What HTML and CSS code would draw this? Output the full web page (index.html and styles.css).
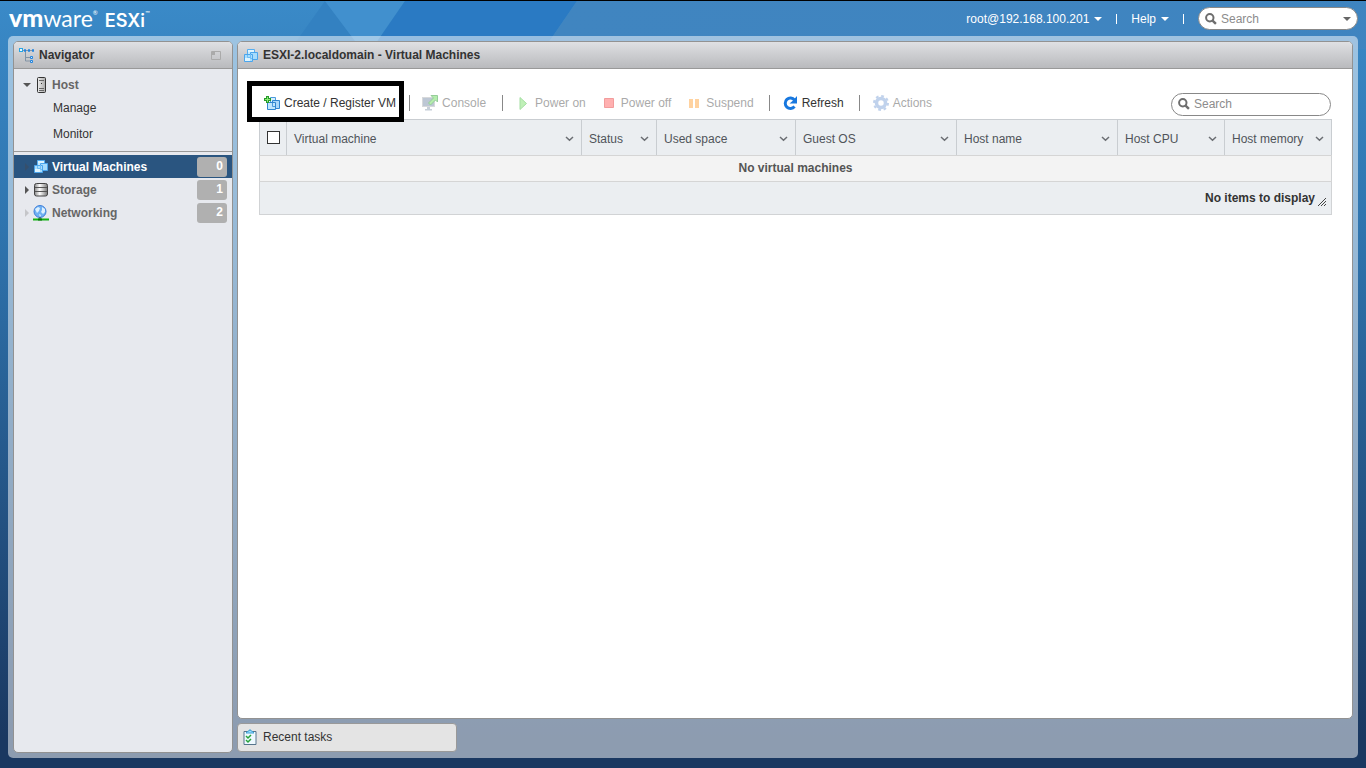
FILE: index.html
```html
<!DOCTYPE html>
<html lang="en">

<head>
  <meta charset="UTF-8">
  <meta name="viewport" content="width=device-width, initial-scale=1.0">
  <title>ESXI-2.localdomain - VMware ESXi</title>
  <link rel="stylesheet" href="styles.css">
</head>

<body>

  <!-- Shared icons -->
  <svg class="sprite" aria-hidden="true">
    <symbol id="icon-vm" viewBox="0 0 14 13">
      <path d="M3.500.5h7v8h-7z" fill="#c4eaff" stroke="#57aef0" />
      <path d="M6.500 3.500h7v7h-7z" fill="#a6dcfc" stroke="#4ba5ec" />
      <path d="M.5 5.500h8v7h-8z" fill="#a9defd" stroke="#4ba5ec" />
      <path d="M6.500 5v4.500H8M3.500 6v2.500H6" fill="none" stroke="#6fbdf5" />
      <path d="M1 9h5v3H1zM4 1h6v2H4z" fill="#dff5ff" />
    </symbol>
    <symbol id="icon-chevron" viewBox="0 0 9 6">
      <path d="M1 1l3.500 3.300L8 1" fill="none" stroke="#6b6e73" stroke-width="1.500" />
    </symbol>
    <symbol id="icon-search" viewBox="0 0 12 12">
      <circle cx="4.800" cy="4.800" r="3.700" fill="none" stroke="#6d6d6d" stroke-width="2" />
      <path d="M7.600 7.600l3.300 3.300" stroke="#6d6d6d" stroke-width="2.400" />
    </symbol>
  </svg>

  <svg class="backdrop" width="100%" height="48" aria-hidden="true">
    <defs><linearGradient id="fade"><stop offset="0" stop-color="#4085c0" /><stop offset="1" stop-color="#3a82c0" /></linearGradient></defs>
    <path d="M325 0L291 48H361z" fill="#3381c1" />
    <path d="M325 0H405L372 48H361z" fill="#4190ce" />
    <path d="M405 0H577L544 48H372z" fill="#2a7ac3" />
    <path d="M577 0H4000V48H544z" fill="url(#fade)" />
  </svg>

  <header class="topbar">
    <div class="logo"><span class="logo-vm">vm</span><span class="logo-ware">ware</span><span class="logo-mark">®</span><span class="logo-esxi">ESXi</span><span class="logo-mark">™</span></div>
    <nav class="user-menu">
      <a href="#">root@192.168.100.201 <i class="caret"></i></a>
      <i class="divider"></i>
      <a href="#">Help <i class="caret"></i></a>
      <i class="divider"></i>
      <label class="search global-search">
        <svg width="12" height="12"><use href="#icon-search" /></svg>
        <input type="text" placeholder="Search" aria-label="Search">
        <i class="caret caret-dark"></i>
      </label>
    </nav>
  </header>

  <div class="frame">
    <aside class="panel navigator">
      <div class="panel-title">
        <svg width="16" height="15" viewBox="0 0 16 15" fill="none">
          <path d="M3 2.500h12M6.500 3v10H11M6.500 9.500H11" stroke="#8394a6" />
          <rect x=".5" y=".5" width="3" height="3" fill="#e8faff" stroke="#29a5e3" />
          <path d="M5.500 1.500h1v2h-1zM9.500 1.500h1v2h-1zM13.500 1.500h1v2h-1zM11.500 8.500h2v2h-2zM11.500 12.500h2v2h-2z" fill="#cfe7fb" stroke="#2585dd" />
        </svg>
        <h2>Navigator</h2>
        <button class="dock" aria-label="Collapse navigator">
          <svg width="10" height="9" viewBox="0 0 10 9"><path d="M.5.5h9v8h-9z" fill="none" stroke="#aaa" /><path d="M1 1h3v3H1z" fill="#aaa" /></svg>
        </button>
      </div>

      <ul class="tree">
        <li><a class="tree-item" href="#">
          <i class="arrow arrow-open"></i>
          <svg class="tree-icon" width="16" height="16" viewBox="0 0 16 16">
            <defs><linearGradient id="tower"><stop offset="0" stop-color="#eee" /><stop offset="1" stop-color="#aaa" /></linearGradient></defs>
            <rect x="4.500" y=".5" width="8" height="15" rx="1" fill="url(#tower)" stroke="#333" />
            <path d="M6 3.500h5M6 11.500h5M6 13.500h5" stroke="#666" />
            <path d="M8 6h1v1H8z" fill="#333" />
          </svg>
          <span>Host</span>
        </a></li>
        <li><a class="tree-child" href="#">Manage</a></li>
        <li><a class="tree-child" href="#">Monitor</a></li>
      </ul>

      <ul class="tree tree-groups">
        <li><a class="tree-item selected" href="#">
          <i class="arrow"></i>
          <svg class="tree-icon" width="16" height="13"><use href="#icon-vm" width="16" height="13" /></svg>
          <span>Virtual Machines</span><b class="badge">0</b>
        </a></li>
        <li><a class="tree-item" href="#">
          <i class="arrow"></i>
          <svg class="tree-icon" width="16" height="14" viewBox="0 0 16 14">
            <defs><linearGradient id="disk"><stop offset="0" stop-color="#888" /><stop offset=".4" stop-color="#fff" /><stop offset="1" stop-color="#777" /></linearGradient></defs>
            <rect x="1.500" y=".5" width="13" height="12.500" rx="2" fill="url(#disk)" stroke="#444" />
            <path d="M2 4.500h12M2 8.500h12" stroke="#555" />
          </svg>
          <span>Storage</span><b class="badge">1</b>
        </a></li>
        <li><a class="tree-item" href="#">
          <i class="arrow arrow-faint"></i>
          <svg class="tree-icon" width="16" height="16" viewBox="0 0 16 16">
            <circle cx="7" cy="6.500" r="6" fill="#6fb0f2" stroke="#3f7fd8" />
            <path d="M2 4l3-2 2 1-1 3-2 2-1-2zM9 2l3 2v3l-2 2-2-2 1-2zM6 9l2 1-1 2z" fill="#dcf0ff" />
            <path d="M7 12v2" stroke="#444" />
            <path d="M0 14.500h16" stroke="#12b212" stroke-width="2" />
            <path d="M5 13.500h4v2H5z" fill="#08720c" />
          </svg>
          <span>Networking</span><b class="badge">2</b>
        </a></li>
      </ul>
    </aside>

    <div class="workspace">
      <main class="panel content">
        <div class="panel-title">
          <svg width="14" height="13"><use href="#icon-vm" /></svg>
          <h1>ESXI-2.localdomain - Virtual Machines</h1>
        </div>

        <div class="content-body">
          <div class="toolbar">
            <button class="tool highlighted">
              <svg width="16" height="15" viewBox="0 0 16 15">
                <path d="M6.500 1.500h5v8h-5z" fill="#d6efff" stroke="#4b9bdd" />
                <path d="M8.500 4.500h7v8h-7z" fill="#a9d8fa" stroke="#2f86d0" />
                <path d="M3.500 6.500h8v7h-8z" fill="#bfe6fd" stroke="#2f86d0" />
                <path d="M8.500 7v3.500h2.500" fill="none" stroke="#4b9bdd" />
                <path d="M3.500 0v7M0 3.500h7" stroke="#279a2b" stroke-width="3" />
                <path d="M3.500 1v5M1 3.500h5" stroke="#8aeb74" />
              </svg>
              Create / Register VM
            </button>
            <i class="separator"></i>
            <button class="tool console" disabled>
              <svg width="16" height="16" viewBox="0 0 16 16">
                <rect x=".5" y="2.500" width="12" height="9" fill="#7d91aa" stroke="#b0b4b8" />
                <path d="M5 12h3v2h2v1.500H3V14h2z" fill="#8fa0b3" />
                <path d="M9 .5h6.500V7l-2-2-5 5-2-2 5-5z" fill="#6bdc5c" stroke="#2f9a38" />
              </svg>
              Console
            </button>
            <i class="separator"></i>
            <button class="tool power-on" disabled>
              <svg width="9" height="13" viewBox="0 0 9 13"><path d="M1 .5l6.500 6L1 12.500z" fill="#82e273" stroke="#4fc14a" /></svg>
              Power on
            </button>
            <button class="tool power-off" disabled>
              <svg width="10" height="10" viewBox="0 0 10 10"><path d="M.5.5h9v9h-9z" fill="#ff6464" stroke="#e63c3c" /></svg>
              Power off
            </button>
            <button class="tool suspend" disabled>
              <svg width="10" height="9" viewBox="0 0 10 9"><path d="M0 0h4v9H0zM6 0h4v9H6z" fill="#ffa742" /></svg>
              Suspend
            </button>
            <i class="separator"></i>
            <button class="tool refresh">
              <svg width="15" height="15" viewBox="0 0 15 15"><path d="M11.500 10.500a5.200 5.200 0 1 1 0-6.500" fill="none" stroke="#1878df" stroke-width="3" /><path d="M14 0v7.500H6.500l3-2.500z" fill="#1878df" /></svg>
              Refresh
            </button>
            <i class="separator"></i>
            <button class="tool actions" disabled>
              <svg width="16" height="16" viewBox="0 0 16 16">
                <circle cx="8" cy="8" r="7" fill="none" stroke="#83a6da" stroke-width="2" stroke-dasharray="2.750 2.750" />
                <circle cx="8" cy="8" r="4.500" fill="none" stroke="#83a6da" stroke-width="3.500" />
              </svg>
              Actions
            </button>
            <label class="search table-search">
              <svg width="12" height="12"><use href="#icon-search" /></svg>
              <input type="text" placeholder="Search" aria-label="Search virtual machines">
            </label>
          </div>

          <table class="vm-table">
            <colgroup>
              <col class="col-check"><col><col class="col-status"><col class="col-space"><col class="col-wide"><col class="col-wide"><col class="col-host"><col class="col-host">
            </colgroup>
            <thead>
              <tr>
                <th class="check-cell"><input type="checkbox" aria-label="Select all"></th>
                <th><div class="column-head">Virtual machine <svg width="9" height="6"><use href="#icon-chevron" /></svg></div></th>
                <th><div class="column-head">Status <svg width="9" height="6"><use href="#icon-chevron" /></svg></div></th>
                <th><div class="column-head">Used space <svg width="9" height="6"><use href="#icon-chevron" /></svg></div></th>
                <th><div class="column-head">Guest OS <svg width="9" height="6"><use href="#icon-chevron" /></svg></div></th>
                <th><div class="column-head">Host name <svg width="9" height="6"><use href="#icon-chevron" /></svg></div></th>
                <th><div class="column-head">Host CPU <svg width="9" height="6"><use href="#icon-chevron" /></svg></div></th>
                <th><div class="column-head">Host memory <svg width="9" height="6"><use href="#icon-chevron" /></svg></div></th>
              </tr>
            </thead>
            <tbody>
              <tr><td colspan="8">No virtual machines</td></tr>
            </tbody>
            <tfoot>
              <tr><td colspan="8"><div class="table-footer">No items to display
                <svg width="8" height="8" viewBox="0 0 8 8"><path d="M0 8l8-8M3 8l5-5M6 8l2-2" stroke="#444" /></svg>
              </div></td></tr>
            </tfoot>
          </table>
        </div>
      </main>

      <button class="recent-tasks">
        <svg width="14" height="16" viewBox="0 0 14 16">
          <path d="M1 2.500h12v13H1z" fill="#eef9ff" stroke="#56758c" />
          <path d="M3 4l2-2h1l1-1.500L8 2h1l2 2z" fill="#9ddcfb" stroke="#3ca0d5" />
          <path d="M3 7l2 2 3-3M3 11l2 2 3-3" fill="none" stroke="#26a33a" stroke-width="1.500" />
        </svg>
        Recent tasks
      </button>
    </div>
  </div>

</body>

</html>
```
FILE: styles.css
```css
* {
  box-sizing: border-box;
}

body {
  font-family: "Liberation Sans", Arial, sans-serif;
  font-size: 12px;
  line-height: 16px;
  color: #333;
  margin: 0;
  min-height: 100vh;
  padding: 0 8px 10px;
  display: flex;
  flex-direction: column;
  border-top: 1px solid #000;
  background: linear-gradient(#3a8ac8, #2f74ae 30%, #1a3861 96%) no-repeat;
}

a {
  color: inherit;
  text-decoration: none;
}

button,
input {
  font: inherit;
  color: inherit;
}

button {
  background: none;
  border: none;
  padding: 0;
  cursor: pointer;
}

h1,
h2 {
  font-size: 12px;
  margin: 0;
}

svg {
  flex: none;
}

.sprite {
  display: none;
}

.backdrop {
  position: absolute;
  top: 1px;
  left: 0;
  z-index: -1;
}

/* Top bar */
.topbar {
  height: 35px;
  display: flex;
  justify-content: space-between;
  align-items: center;
  color: white;
}

.logo {
  display: flex;
  align-items: baseline;
  padding-left: 1px;
  font-family: Lato, sans-serif;
  line-height: 28px;
}

.logo-vm {
  font-size: 25px;
  font-weight: 900;
}

.logo-ware {
  font-size: 23px;
}

.logo-esxi {
  font-family: Inter, sans-serif;
  font-size: 18px;
  font-weight: 600;
  margin-left: 7px;
}

.logo-mark {
  font-size: 6px;
  line-height: 8px;
  align-self: flex-start;
  margin-top: 6px;
}

.user-menu {
  display: flex;
  align-items: center;
}

.user-menu a {
  display: flex;
  align-items: center;
  gap: 5px;
}

.caret {
  border: 4px solid transparent;
  border-top-color: currentColor;
  border-bottom: none;
}

.caret-dark {
  color: #666;
}

.divider {
  width: 1px;
  height: 10px;
  margin: 0 14px;
  background-color: white;
}

.search {
  display: flex;
  align-items: center;
  gap: 4px;
  width: 160px;
  height: 23px;
  padding: 0 6px;
  border: 1px solid #888;
  border-radius: 12px;
  background-color: white;
}

.search input {
  flex: 1;
  min-width: 0;
  border: none;
  outline: none;
  padding: 0;
  background: none;
  color: #333;
}

.search input::placeholder {
  color: #8c8c8c;
}

/* Main frame */
.frame {
  flex: 1;
  display: flex;
  gap: 4px;
  padding: 5px;
  border-radius: 5px;
  background-color: rgba(255, 255, 255, 0.5);
}

.panel {
  border: 1px solid #929292;
  border-radius: 5px;
  overflow: hidden;
}

.panel-title {
  height: 27px;
  display: flex;
  align-items: center;
  gap: 4px;
  padding: 0 5px;
  border-bottom: 1px solid #999;
  background: linear-gradient(#dfe0e3, #b9babd);
}

.content .panel-title {
  padding: 0 6px;
  gap: 5px;
}

.navigator {
  width: 220px;
  background-color: #e7e9ee;
}

.dock {
  display: flex;
  margin-left: auto;
  padding: 0 6px;
}

.tree {
  list-style: none;
  margin: 0;
  padding: 4px 0;
}

.tree-groups {
  border-top: 1px solid #999;
  padding-top: 3px;
}

.tree-item {
  display: flex;
  align-items: center;
  height: 23px;
  padding: 0 5px 0 11px;
  font-weight: bold;
  color: #666;
}

.tree-item.selected {
  background-color: #2a5580;
  color: white;
}

.tree-icon {
  width: 16px;
  margin: 0 3px 0 4px;
}

.arrow {
  width: 4px;
  border: 4px solid transparent;
  border-left-color: #555;
  border-right: none;
}

.arrow-open {
  width: 8px;
  margin: 0 -2px;
  border: 4px solid transparent;
  border-top-color: #555;
  border-bottom: none;
}

.arrow-faint {
  border-left-color: #c5c6c9;
}

.selected .arrow {
  border-left-color: #354f6c;
}

.badge {
  width: 30px;
  height: 20px;
  margin-left: auto;
  padding: 1px 4px;
  border-radius: 3px;
  background-color: #b0b0b0;
  color: white;
  text-align: right;
}

.tree-child {
  display: block;
  padding: 5px 0 5px 39px;
}

.tree li:nth-child(2) .tree-child {
  padding-top: 4px;
}

/* Workspace */
.workspace {
  flex: 1;
  display: flex;
  flex-direction: column;
  gap: 4px;
  padding-bottom: 1px;
}

.content {
  flex: 1;
  background-color: white;
}

.content-body {
  padding: 18px 20px 0 21px;
}

.toolbar {
  display: flex;
  align-items: center;
  height: 32px;
}

.tool {
  display: flex;
  align-items: center;
  gap: 4px;
  height: 32px;
  white-space: nowrap;
}

.tool:disabled {
  opacity: 0.5;
  color: #555;
  cursor: default;
}

.separator {
  width: 1px;
  height: 16px;
  margin: 0 13px;
  background-color: #888;
}

.highlighted {
  position: relative;
  padding-left: 5px;
}

.highlighted::after {
  content: "";
  position: absolute;
  inset: -6px -8px -3px -12px;
  border: 5px solid black;
}

.console {
  margin: 0 3px 0 -1px;
}

.power-on,
.power-off,
.suspend {
  gap: 7px;
  margin-right: 18px;
}

.power-on {
  margin-left: 3px;
}

.suspend {
  margin-right: 2px;
}

.refresh {
  margin-right: 2px;
}

.table-search {
  margin: 2px 1px 0 auto;
}

.vm-table {
  width: 100%;
  table-layout: fixed;
  border-collapse: collapse;
  border: 1px solid #d1d3d5;
  font-weight: bold;
}

.vm-table th {
  height: 36px;
  padding: 2px 7px 0;
  border: 1px solid #c9cdd1;
  border-bottom-color: #d5d5d5;
  background-color: #ebeef1;
  font-weight: normal;
  text-align: left;
  color: #50545a;
}

.vm-table .check-cell {
  padding: 0;
}

.check-cell input {
  appearance: none;
  display: block;
  width: 13px;
  height: 13px;
  margin: 0 auto;
  border: 1px solid #333;
  background-color: white;
}

.column-head {
  display: flex;
  align-items: center;
  justify-content: space-between;
  white-space: nowrap;
}

.col-check {
  width: 27px;
}

.col-status {
  width: 75px;
}

.col-space {
  width: 139px;
}

.col-wide {
  width: 161px;
}

.col-host {
  width: 107px;
}

.vm-table tbody td {
  height: 26px;
  padding: 0 0 1px;
  background-color: #f3f3f3;
  text-align: center;
  color: #555;
}

.vm-table tfoot td {
  height: 33px;
  padding: 0 5px;
  border-top: 1px solid #d5d5d5;
  background-color: #ebeef1;
}

.table-footer {
  display: flex;
  justify-content: flex-end;
  align-items: flex-end;
  gap: 3px;
}

.recent-tasks {
  display: flex;
  align-items: center;
  gap: 6px;
  width: 220px;
  height: 29px;
  padding: 0 5px 2px;
  border: 1px solid #999;
  border-radius: 4px;
  background-color: #e4e4e4;
}
```
